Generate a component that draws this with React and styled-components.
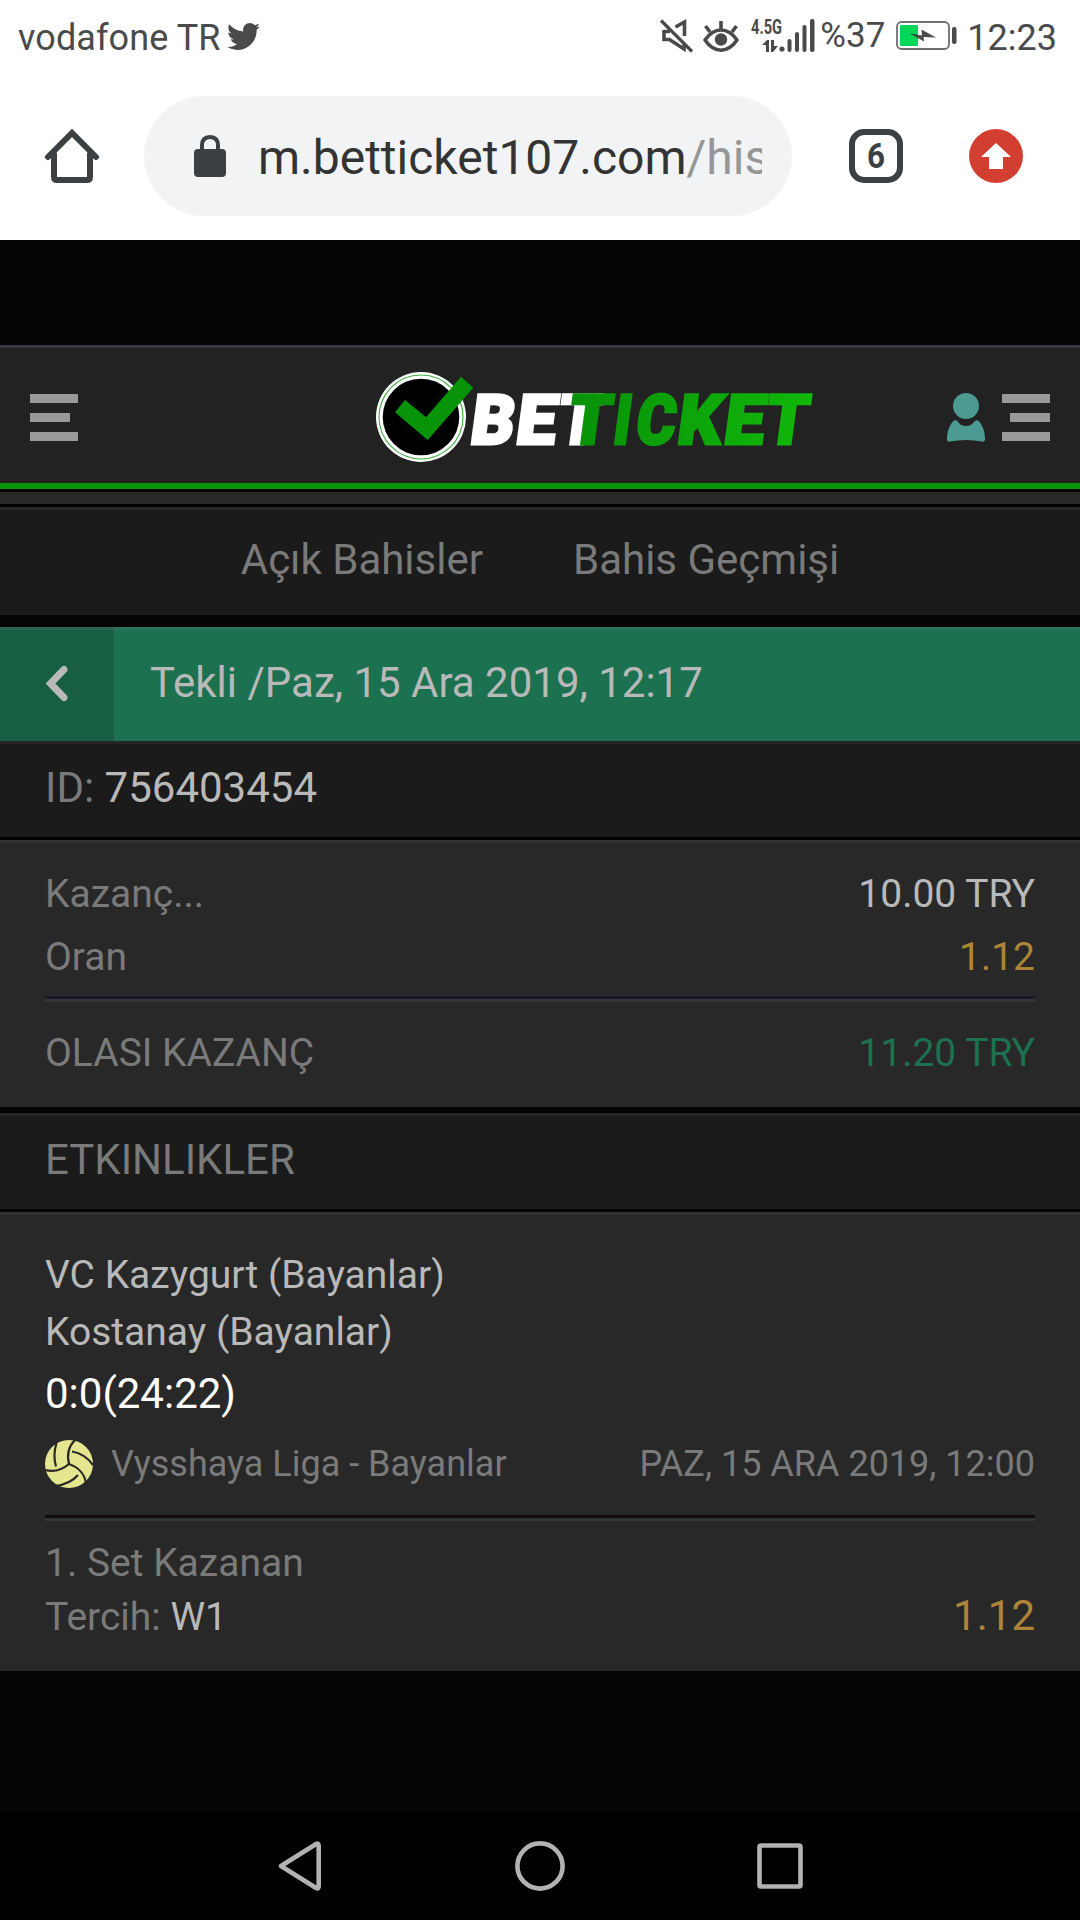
import React from 'react';
import styled, { createGlobalStyle } from 'styled-components';
import { FaTwitter } from 'react-icons/fa';

const Global = createGlobalStyle`
  * { box-sizing: border-box; }
  body { margin: 0; background: #060405; font-family: Roboto, "Noto Sans", sans-serif; }
  svg { display: block; flex: none; overflow: visible; }
`;

const Screen = styled.div`
  width: 1080px;
  height: 1920px;
  display: flex;
  flex-direction: column;
  background: #060405;
  overflow: hidden;
`;

const StatusBar = styled.header`
  height: 72px;
  padding: 18px 23px 0 18px;
  display: flex;
  align-items: flex-start;
  background: #fff;
  color: #4a4a4a;
`;

const StatusText = styled.span`
  font-size: ${(p) => p.$size || 36}px;
  line-height: 40px;
  white-space: nowrap;
  margin-left: ${(p) => p.$left || 0}px;
  margin-top: ${(p) => p.$top || 0}px;
  letter-spacing: ${(p) => p.$spacing || 0}px;
`;

const StatusIcons = styled.div`
  margin-left: auto;
  display: flex;
  align-items: flex-start;
`;

const StatusIcon = styled.div`
  margin: ${(p) => p.$top || 0}px 0 0 ${(p) => p.$left || 0}px;
`;

const Bird = styled(FaTwitter)`
  width: 33px;
  height: 33px;
  margin: 2px 0 0 6px;
`;

const Toolbar = styled.div`
  height: 168px;
  padding: 0 57px 0 45px;
  display: flex;
  align-items: center;
  background: #fff;
`;

const UrlPill = styled.div`
  width: 648px;
  height: 120px;
  margin: 0 57px 0 45px;
  padding: 0 30px 0 50px;
  display: flex;
  align-items: center;
  border-radius: 60px;
  background: #f1f3f5;
`;

const Url = styled.div`
  flex: 1;
  margin-left: 32px;
  padding-top: 3px;
  overflow: hidden;
  white-space: nowrap;
  font-size: 48px;
  line-height: 60px;
  color: #333;
  span { color: #959796; }
`;

const TabCount = styled.div`
  width: 54px;
  height: 54px;
  margin-right: 66px;
  display: flex;
  align-items: center;
  justify-content: center;
  border: 6px solid #3c4043;
  border-radius: 15px;
`;

const SiteHeader = styled.div`
  height: 144px;
  margin-top: 105px;
  padding: 3px 30px 0;
  display: flex;
  align-items: center;
  border-top: 3px solid #383845;
  border-bottom: 6px solid #089408;
  background: #222;
`;

const HeaderSide = styled.div`
  height: 50px;
  margin-top: 2px;
  display: flex;
  align-items: flex-start;
  gap: 17px;
`;

const Brand = styled.div`
  margin: 0 auto 0 296px;
`;

const Bars = styled.div`
  height: 49px;
  padding-top: 1px;
  width: 48px;
  display: flex;
  flex-direction: column;
  align-items: ${(p) => (p.$end ? 'flex-end' : 'flex-start')};
  gap: 10px;
`;

const Bar = styled.i`
  width: ${(p) => (p.$short ? 40 : 48)}px;
  height: 9px;
  background: #999;
`;

const Strip = styled.div`
  height: 18px;
  border-top: 3px solid #040304;
  border-bottom: 3px solid #040304;
  background: #282828;
`;

const Tabs = styled.nav`
  height: 108px;
  margin-bottom: 12px;
  padding-bottom: 6px;
  display: flex;
  align-items: center;
  justify-content: center;
  gap: 90px;
  border-top: 3px solid #272727;
  background: #1b1b1b;
`;

const Tab = styled.span`
  font-size: 42px;
  line-height: 49px;
  color: #7a7a7a;
`;

const TicketTitle = styled.div`
  height: 114px;
  display: flex;
  background: #1c7150;
`;

const Back = styled.div`
  width: 114px;
  padding: 36px 0 0 46px;
  border-top: 3px solid #2e6653;
  background: #175e43;
`;

const TitleText = styled.div`
  flex: 1;
  padding: 0 36px 6px;
  display: flex;
  align-items: center;
  border-top: 3px solid #28745b;
  font-size: 42px;
  line-height: 49px;
  color: #b9b9b9;
`;

const SectionBar = styled.div`
  height: 99px;
  padding: 0 45px 6px;
  display: flex;
  align-items: center;
  border-top: 3px solid #272727;
  border-bottom: 3px solid #040304;
  background: #1b1b1b;
  font-size: 42px;
  line-height: 49px;
  white-space: pre;
  color: #7a7a7a;
`;

const Bright = styled.span`
  color: #b9b9b9;
`;

const Panel = styled.section`
  height: ${(p) => p.$height}px;
  margin-bottom: ${(p) => p.$after || 0}px;
  padding: ${(p) => p.$top}px 45px 0;
  border-top: 3px solid #323232;
  background: #282828;
`;

const tones = { muted: '#7a7a7a', bright: '#b9b9b9', gold: '#ad8438', green: '#1c7150', white: '#fff' };

const Row = styled.div`
  display: flex;
  align-items: center;
  justify-content: space-between;
  height: ${(p) => p.$height}px;
  margin-top: ${(p) => p.$gap || 0}px;
`;

const Label = styled.div`
  display: flex;
  align-items: center;
  white-space: pre;
  font-size: ${(p) => p.$size || 39}px;
  line-height: ${(p) => p.$line || 50}px;
  color: ${(p) => tones[p.$tone || 'muted']};
  padding-bottom: ${(p) => p.$lift || 0}px;
`;

const Rule = styled.hr`
  height: 6px;
  margin: ${(p) => p.$gap}px 0 0;
  border: 0;
  border-top: 3px solid ${(p) => p.$color};
  background: #363636;
`;

const League = styled.div`
  display: flex;
  align-items: center;
  gap: 18px;
`;

const NavBar = styled.footer`
  height: 108px;
  margin-top: auto;
  padding: 0 277px 0 278px;
  display: flex;
  align-items: center;
  justify-content: space-between;
  background: #000;
`;

const letters = [
  ['T', 566.2, 42.5],
  ['I', 611.5, 16.9],
  ['C', 634, 39.2],
  ['K', 675.4, 43.8],
  ['E', 722, 40.2],
  ['T', 763.2, 42.5],
];

const Logo = () => (
  <svg width="440" height="96" viewBox="374 369 440 96">
    <defs>
      <linearGradient id="ticket" gradientUnits="userSpaceOnUse" x1="566" x2="808" y1="0" y2="0">
        <stop offset="0" stopColor="#089108" />
        <stop offset="1" stopColor="#11b80a" />
      </linearGradient>
    </defs>
    <circle cx="421" cy="417" r="45" fill="#fff" />
    <circle cx="421" cy="417" r="42" fill="none" stroke="#3fae3f" strokeWidth="1.1" />
    <circle cx="421" cy="417" r="38.3" fill="#000" />
    <path d="M405 400L426 417.3L461 376.7L473.3 387.7L427.7 440L395 412.3Z" fill="#089408" />
    <g transform="translate(0 444.200) skewX(-7.6)" fontFamily="Roboto" fontWeight="900" fontSize="69.4" strokeWidth="3">
      <g fill="#fff" stroke="#fff">
        <text x="468.4" textLength="43.6" lengthAdjust="spacingAndGlyphs">B</text>
        <text x="514" textLength="40" lengthAdjust="spacingAndGlyphs">E</text>
        <text x="555.4" textLength="42.3" lengthAdjust="spacingAndGlyphs">T</text>
      </g>
      <g fill="url(#ticket)" stroke="url(#ticket)">
        {letters.map(([c, x, w]) => (
          <text key={x} x={x} textLength={w} lengthAdjust="spacingAndGlyphs">{c}</text>
        ))}
      </g>
    </g>
  </svg>
);

const MuteIcon = () => (
  <svg width="34" height="35" viewBox="0 0 34 35" fill="none" stroke="#4a4a4a">
    <path d="M4 12V21.5H9.5L24 31V27M4 13.500H10M15.500 9L24.500 4V18" strokeWidth="3.6" />
    <path d="M1 2.5L32 33.5" strokeWidth="3.2" />
  </svg>
);

const EyeIcon = () => (
  <svg width="36" height="33" viewBox="0 0 36 33" fill="none" stroke="#4a4a4a" strokeWidth="3.6">
    <path d="M2 20Q9 10 18 10Q27 10 34 20Q27 30.200 18 30.200Q9 30.200 2 20Z" strokeLinejoin="round" />
    <path d="M18 10V1M7 12L2.500 6M29 12L33.500 6" />
    <circle cx="18" cy="19.500" r="6.200" fill="#4a4a4a" stroke="none" />
  </svg>
);

const SignalIcon = () => (
  <svg width="64" height="35" viewBox="0 0 64 35" fill="#4a4a4a">
    <text x="0" y="16" fontFamily="Roboto" fontWeight="700" fontSize="21" textLength="31" lengthAdjust="spacingAndGlyphs">4.5G</text>
    <path d="M15 22.500V34H18V22H16L11 27H15ZM20 22V34H22L27 28H23V22Z" />
    <circle cx="31" cy="31" r="2.600" />
    <rect x="36.500" y="21" width="4" height="13" rx="2" />
    <rect x="44" y="14" width="4" height="20" rx="2" />
    <rect x="51.500" y="7" width="4" height="27" rx="2" />
    <rect x="59" y="1" width="4.500" height="33" rx="2" />
  </svg>
);

const BatteryIcon = () => (
  <svg width="61" height="30" viewBox="0 0 61 30">
    <rect x="1" y="1" width="52" height="27" rx="4.500" fill="none" stroke="#707070" strokeWidth="1.800" />
    <rect x="4" y="4" width="18" height="21" rx="1" fill="#00d759" />
    <path d="M14 12.500L26 14.500L25.500 8.500L40 16.500L27.500 16L28 20.500Z" fill="#4a4a4a" />
    <path d="M14 12.500L22 13.800V17.200Z" fill="#205c38" />
    <rect x="56" y="6" width="4.500" height="17" rx="2" fill="#4a4a4a" />
  </svg>
);

const HomeIcon = () => (
  <svg width="54" height="54" viewBox="0 0 54 54" fill="none" stroke="#3c4043" strokeWidth="6">
    <path d="M9 24V48Q9 51 12 51H42Q45 51 45 48V24" />
    <path d="M3 28L27 4L51 28" strokeLinecap="round" />
  </svg>
);

const LockIcon = () => (
  <svg width="32" height="42" viewBox="0 0 32 42">
    <rect y="14" width="32" height="28" rx="4" fill="#3c4043" />
    <path d="M8 16V10.500Q8 2 16 2Q24 2 24 10.500V16" fill="none" stroke="#3c4043" strokeWidth="4" />
  </svg>
);

const UpdateIcon = () => (
  <svg width="54" height="54" viewBox="0 0 54 54">
    <circle cx="27" cy="27" r="27" fill="#d23f31" />
    <path d="M27 14L42 28H34V40H20V28H12Z" fill="#fff" />
  </svg>
);

const UserIcon = () => (
  <svg width="38" height="49" viewBox="0 0 38 49" fill="#4b9b93">
    <circle cx="19" cy="13" r="13" />
    <path d="M8 27Q10 27 11.500 29.500Q14 33 19 33Q24 33 26.500 29.500Q28 27 30 27C35 30 38 38 38 46Q38 49 35 48.600Q27 47 19 47Q11 47 3 48.600Q0 49 0 46C0 38 3 30 8 27Z" />
  </svg>
);

const BallIcon = () => (
  <svg width="48" height="48" viewBox="0 0 48 48">
    <circle cx="24" cy="24" r="24" fill="#e5e690" />
    <g fill="none" stroke="#282828" strokeWidth="2.200">
      <path d="M30 0C22 8 22 16 24 24C33 27 40 34 41 44" />
      <path d="M0 30C8 32 17 30 24 24" />
      <path d="M11.500 3C9 11 8.500 18 11 26.500" />
      <path d="M27 11.500C36 13 43 18 48 25" />
      <path d="M10 46C19 45 27 42 33 35" />
    </g>
  </svg>
);

export default function App() {
  return (
    <Screen>
      <Global />
      <StatusBar>
        <StatusText $spacing={0.1}>vodafone TR</StatusText>
        <Bird />
        <StatusIcons>
          <StatusIcon><MuteIcon /></StatusIcon>
          <StatusIcon $left={9} $top={2}><EyeIcon /></StatusIcon>
          <StatusIcon $left={12}><SignalIcon /></StatusIcon>
          <StatusText $size={35} $left={5} $top={-2}>%37</StatusText>
          <StatusIcon $left={11} $top={3}><BatteryIcon /></StatusIcon>
          <StatusText $left={10}>12:23</StatusText>
        </StatusIcons>
      </StatusBar>
      <Toolbar>
        <HomeIcon />
        <UrlPill>
          <LockIcon />
          <Url>m.betticket107.com<span>/his</span></Url>
        </UrlPill>
        <TabCount>
          <svg width="18" height="28" viewBox="0 0 18 28">
            <text x="0" y="26" fontFamily="Roboto" fontWeight="700" fontSize="35" fill="#3c4043" textLength="18" lengthAdjust="spacingAndGlyphs">6</text>
          </svg>
        </TabCount>
        <UpdateIcon />
      </Toolbar>

      <SiteHeader>
        <HeaderSide>
          <Bars><Bar /><Bar $short /><Bar /></Bars>
        </HeaderSide>
        <Brand><Logo /></Brand>
        <HeaderSide>
          <UserIcon />
          <Bars $end><Bar /><Bar $short /><Bar /></Bars>
        </HeaderSide>
      </SiteHeader>
      <Strip />
      <Tabs>
        <Tab>Açık Bahisler</Tab>
        <Tab>Bahis Geçmişi</Tab>
      </Tabs>

      <TicketTitle>
        <Back>
          <svg width="24" height="36" viewBox="0 0 24 36" fill="none" stroke="#b9b9b9" strokeWidth="7" strokeLinecap="round">
            <path d="M18 3.500L4.500 17.500L18 31.500" />
          </svg>
        </Back>
        <TitleText>Tekli /Paz, 15 Ara 2019, 12:17</TitleText>
      </TicketTitle>
      <SectionBar>ID: <Bright>756403454</Bright></SectionBar>

      <Panel $height={267} $top={21} $after={6}>
        <Row $height={60}><Label>Kazanç...</Label><Label $tone="bright">10.00 TRY</Label></Row>
        <Row $height={60} $gap={3}><Label>Oran</Label><Label $tone="gold">1.12</Label></Row>
        <Rule $gap={9} $color="#141828" />
        <Row $height={60} $gap={21}><Label>OLASI KAZANÇ</Label><Label $tone="green">11.20 TRY</Label></Row>
      </Panel>

      <SectionBar>ETKINLIKLER</SectionBar>
      <Panel $height={459} $top={32}>
        <Row $height={56}><Label $tone="bright">VC Kazygurt (Bayanlar)</Label></Row>
        <Row $height={56} $gap={1}><Label $tone="bright">Kostanay (Bayanlar)</Label></Row>
        <Row $height={61} $gap={3}><Label $tone="white" $size={42} $line={49}>0:0(24:22)</Label></Row>
        <Row $height={50} $gap={15}>
          <League><BallIcon /><Label $size={36}>Vysshaya Liga - Bayanlar</Label></League>
          <Label $size={36}>PAZ, 15 ARA 2019, 12:00</Label>
        </Row>
        <Rule $gap={26} $color="#110d0e" />
        <Row $height={54} $gap={15}><Label>1. Set Kazanan</Label></Row>
        <Row $height={54}>
          <Label>Tercih: <Bright>W1</Bright></Label>
          <Label $tone="gold" $size={42} $line={49} $lift={3}>1.12</Label>
        </Row>
      </Panel>

      <NavBar>
        <svg width="43" height="50" viewBox="0 0 43 50" fill="none" stroke="#b2b2b2" strokeWidth="4.600" strokeLinejoin="round">
          <path d="M3 25L38.500 2.800Q40.700 2 40.700 5V45Q40.700 48 38.500 47.200Z" />
        </svg>
        <svg width="50" height="50" viewBox="-1 0 50 50" fill="none" stroke="#b2b2b2" strokeWidth="4.600">
          <circle cx="25" cy="25" r="22.600" />
        </svg>
        <svg width="46" height="46" viewBox="0 0 46 46" fill="none" stroke="#b2b2b2" strokeWidth="4.600">
          <rect x="2.500" y="2.500" width="41" height="41" rx="1.500" />
        </svg>
      </NavBar>
    </Screen>
  );
}
